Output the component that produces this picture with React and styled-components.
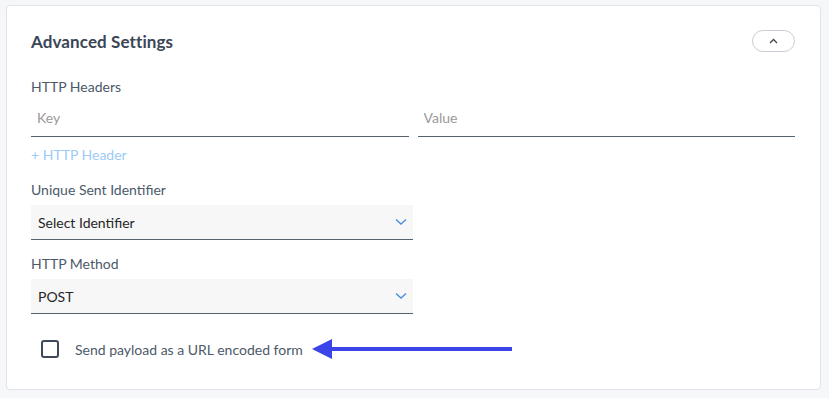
import React, { useState } from "react";
import styled, { createGlobalStyle } from "styled-components";

const GlobalStyle = createGlobalStyle`
  body {
    margin: 0;
    background: #f6f7f9;
    font-family: Lato, "Open Sans", sans-serif;
  }
`;

const Page = styled.div`
  padding: 5px 8px 8px 6px;
`;

const Card = styled.section`
  background: #ffffff;
  border: 1px solid #e1e3e8;
  border-radius: 4px;
  padding: 24px 25px 30px 24px;
  height: 385px;
  box-sizing: border-box;
`;

const Header = styled.div`
  display: flex;
  align-items: center;
  justify-content: space-between;
  margin-bottom: 26px;
`;

const Title = styled.h2`
  margin: 0;
  font-size: 17px;
  font-weight: 700;
  color: #3a4656;
  letter-spacing: 0.1px;
`;

const Toggle = styled.button`
  width: 43px;
  height: 22px;
  border-radius: 11px;
  border: 1px solid #c9ced6;
  background: #fff;
  display: flex;
  align-items: center;
  justify-content: center;
  padding: 0;
  cursor: pointer;
`;

const Label = styled.div`
  font-size: 14px;
  color: #4c5969;
  margin-bottom: ${(p) => p.gap ?? 7}px;
  line-height: 17px;
`;

const Row = styled.div`
  display: grid;
  grid-template-columns: 1fr 1fr;
  gap: 9px;
`;

const TextInput = styled.input`
  border: none;
  border-bottom: 1px solid #56636f;
  padding: 6px 6px 10px;
  font: inherit;
  font-size: 14px;
  color: #333;
  outline: none;
  background: transparent;
  &::placeholder {
    color: #9a9a9a;
  }
`;

const AddLink = styled.a`
  display: inline-block;
  color: #9ccbf6;
  font-size: 14px;
  margin: 9px 0 18px;
  cursor: pointer;
`;

const Field = styled.div`
  margin-bottom: ${(p) => p.gap || 0}px;
`;

const Select = styled.div`
  width: 382px;
  height: 35px;
  box-sizing: border-box;
  background: #f7f7f7;
  border-bottom: 1px solid #56636f;
  display: flex;
  align-items: center;
  justify-content: space-between;
  padding: 0 6px 0 7px;
  font-size: 14px;
  color: #262626;
`;

const CheckRow = styled.label`
  display: flex;
  align-items: center;
  gap: 16px;
  margin-left: 10px;
  margin-top: 24px;
  font-size: 14px;
  color: #4c5969;
`;

const Box = styled.span`
  width: 14px;
  height: 14px;
  border: 2px solid #3e4a5a;
  border-radius: 3px;
  display: inline-block;
`;

const ArrowWrap = styled.span`
  display: flex;
  margin-left: -7px;
`;

const Chevron = ({ up }) =>
  up ? (
    <svg width="9" height="6" viewBox="0 0 9 6">
      <path d="M1 5 L4.5 1.5 L8 5" fill="none" stroke="#444" strokeWidth="1.3" />
    </svg>
  ) : (
    <svg width="12" height="8" viewBox="0 0 12 8">
      <path d="M1 1.5 L6 6 L11 1.5" fill="none" stroke="#4a90d9" strokeWidth="1.4" />
    </svg>
  );

const Arrow = () => (
  <svg width="200" height="22" viewBox="0 0 200 22">
    <path d="M0 11 L20 1 L20 21 Z" fill="#3b44e8" />
    <rect x="18" y="9" width="182" height="4" fill="#3b44e8" />
  </svg>
);

export default function App() {
  const [checked, setChecked] = useState(false);
  return (
    <>
      <GlobalStyle />
      <Page>
        <Card>
          <Header>
            <Title>Advanced Settings</Title>
            <Toggle>
              <Chevron up />
            </Toggle>
          </Header>
          <Label gap={8}>HTTP Headers</Label>
          <Row>
            <TextInput placeholder="Key" />
            <TextInput placeholder="Value" />
          </Row>
          <AddLink>+ HTTP Header</AddLink>
          <Field gap={15}>
            <Label>Unique Sent Identifier</Label>
            <Select>
              Select Identifier
              <Chevron />
            </Select>
          </Field>
          <Field>
            <Label>HTTP Method</Label>
            <Select>
              POST
              <Chevron />
            </Select>
          </Field>
          <CheckRow onClick={() => setChecked(!checked)}>
            <Box />
            Send payload as a URL encoded form
            <ArrowWrap>
              <Arrow />
            </ArrowWrap>
          </CheckRow>
        </Card>
      </Page>
    </>
  );
}
